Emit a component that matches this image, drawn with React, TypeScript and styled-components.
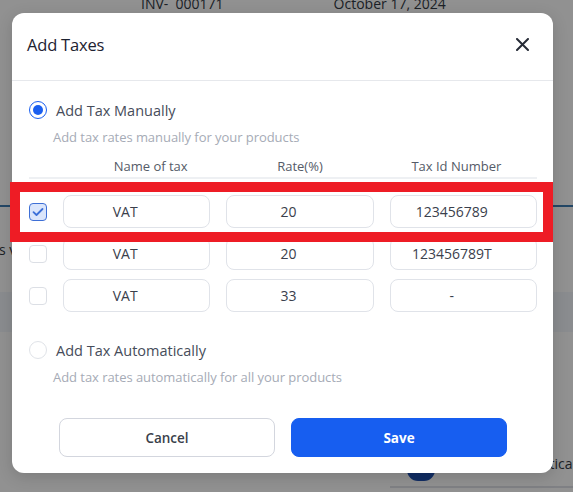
import React, { useState } from 'react';
import styled, { createGlobalStyle } from 'styled-components';

const GlobalStyle = createGlobalStyle`
  html, body {
    margin: 0;
    padding: 0;
  }
  body {
    font-family: "Open Sans", "Noto Sans", Arial, sans-serif;
    background: #ffffff;
  }
  * { box-sizing: border-box; }
`;

const Page = styled.div`
  position: relative;
  width: 573px;
  height: 492px;
  overflow: hidden;
  background: #ffffff;
`;

const BackPage = styled.div`
  display: flex;
  flex-direction: column;
  height: 100%;
  color: #333a45;
  font-size: 14px;
`;

const BackHeader = styled.div`
  display: flex;
  gap: 110px;
  padding-left: 141px;
  margin-top: -6px;
  height: 20px;
`;

const BackLine = styled.div<{ $top: number }>`
  height: 2px;
  background: #3f7db4;
  margin-top: ${p => p.$top}px;
`;

const BackText = styled.div<{ $top: number; $left: number }>`
  margin-top: ${p => p.$top}px;
  margin-left: ${p => p.$left}px;
  font-size: 14px;
  white-space: nowrap;
`;

const BackBand = styled.div<{ $top: number }>`
  margin-top: ${p => p.$top}px;
  height: 40px;
  background: #f3f6fb;
`;

const BackFooter = styled.div`
  margin-top: auto;
  display: flex;
  align-items: flex-start;
  gap: 63px;
  height: 23px;
  border-bottom: 2px solid #dfe2e8;
  margin-left: 390px;
  padding-left: 17px;
  margin-bottom: 4px;
  white-space: nowrap;
`;

const BackToggle = styled.div`
  width: 28px;
  height: 22px;
  border-radius: 11px;
  background: #1e4fb0;
  flex-shrink: 0;
  margin-top: -6px;
`;

const BackLabel = styled.span`
  margin-top: -11px;
`;

const Backdrop = styled.div`
  position: absolute;
  inset: 0;
  background: rgba(0, 0, 0, 0.43);
  display: flex;
  align-items: flex-start;
  padding: 13px 20px 0 12px;
`;

const Modal = styled.div`
  width: 541px;
  height: 460px;
  background: #ffffff;
  border-radius: 12px;
  box-shadow: 0 4px 16px rgba(0, 0, 0, 0.15);
  display: flex;
  flex-direction: column;
  position: relative;
`;

const ModalHeader = styled.div`
  height: 68px;
  display: flex;
  align-items: center;
  justify-content: space-between;
  padding: 0 24px 5px 15px;
  border-bottom: 1px solid #e6e8ec;
`;

const Title = styled.h2`
  margin: 0;
  font-size: 16.5px;
  font-weight: 500;
  color: #1d2230;
  letter-spacing: -0.2px;
`;

const CloseButton = styled.button`
  border: none;
  background: none;
  padding: 0;
  display: flex;
  cursor: pointer;
`;

const Body = styled.div`
  padding: 20px 16px 0 17px;
  display: flex;
  flex-direction: column;
`;

const RadioRow = styled.label`
  display: flex;
  align-items: center;
  gap: 9px;
  font-size: 14.5px;
  color: #464c5a;
  cursor: pointer;
  height: 18px;
`;

const Radio = styled.span<{ $checked?: boolean }>`
  width: 18px;
  height: 18px;
  border-radius: 50%;
  border: 1.5px solid ${p => (p.$checked ? '#1a5ff0' : '#e0e3e8')};
  display: flex;
  align-items: center;
  justify-content: center;
  flex-shrink: 0;
  &::after {
    content: '';
    width: 10px;
    height: 10px;
    border-radius: 50%;
    background: ${p => (p.$checked ? '#1a5ff0' : 'transparent')};
  }
`;

const Hint = styled.div`
  font-size: 13px;
  color: #a6abb6;
  margin: 9px 0 0 24px;
  letter-spacing: -0.05px;
`;

const Grid = styled.div`
  display: grid;
  grid-template-columns: 18px 1fr 1fr 1fr;
  column-gap: 16px;
  row-gap: 9px;
  align-items: center;
  margin-top: 11px;
`;

const HeadRow = styled.div`
  grid-column: 1 / -1;
  display: grid;
  grid-template-columns: 18px 1fr 1fr 1fr;
  column-gap: 16px;
  border-bottom: 2px solid #eef0f3;
  padding-bottom: 2px;
  margin-bottom: 7px;
`;

const HeadCell = styled.div<{ $shift?: number }>`
  font-size: 13px;
  color: #555b68;
  text-align: center;
  padding-left: ${p => Math.max(0, (p.$shift ?? 0) * 2)}px;
  padding-right: ${p => Math.max(0, -(p.$shift ?? 0) * 2)}px;
`;

const Check = styled.span<{ $checked?: boolean }>`
  width: 18px;
  height: 18px;
  border-radius: 4px;
  border: 1.5px solid ${p => (p.$checked ? '#3e6fd6' : '#dcdfe5')};
  background: ${p => (p.$checked ? '#dae5fb' : '#fff')};
  display: flex;
  align-items: center;
  justify-content: center;
  cursor: pointer;
`;

const Field = styled.div`
  height: 33px;
  border: 1px solid #e0e3e9;
  border-radius: 8px;
  display: flex;
  align-items: center;
  justify-content: center;
  padding-right: 23px;
  font-size: 14px;
  color: #3a404c;
`;

const AutoSection = styled.div`
  margin-top: 29px;
  display: flex;
  flex-direction: column;
`;

const Footer = styled.div`
  margin-top: auto;
  display: grid;
  grid-template-columns: 1fr 1fr;
  gap: 16px;
  padding: 0 46px 16px 47px;
`;

const Button = styled.button<{ $primary?: boolean }>`
  height: 39px;
  border-radius: 8px;
  font-family: inherit;
  font-size: 13.5px;
  font-weight: ${p => (p.$primary ? 700 : 600)};
  border: 1px solid ${p => (p.$primary ? '#175ef0' : '#d3d6de')};
  background: ${p => (p.$primary ? '#175ef0' : '#ffffff')};
  color: ${p => (p.$primary ? '#ffffff' : '#3a3f4b')};
  cursor: pointer;
`;

const Highlight = styled.div`
  position: absolute;
  left: -2px;
  top: 169px;
  width: 543px;
  height: 60px;
  border: 10px solid #ee1c25;
  pointer-events: none;
`;

const CheckIcon = () => (
  <svg width="12" height="10" viewBox="0 0 12 10" fill="none">
    <path d="M1.5 5.2 L4.5 8 L10.5 2" stroke="#3b6fd8" strokeWidth="1.8" strokeLinecap="round" strokeLinejoin="round" />
  </svg>
);

const CloseIcon = () => (
  <svg width="13" height="13" viewBox="0 0 13 13" fill="none">
    <path d="M1 1 L12 12 M12 1 L1 12" stroke="#262b36" strokeWidth="2" strokeLinecap="round" />
  </svg>
);

type TaxRow = { name: string; rate: string; id: string };

const rows: TaxRow[] = [
  { name: 'VAT', rate: '20', id: '123456789' },
  { name: 'VAT', rate: '20', id: '123456789T' },
  { name: 'VAT', rate: '33', id: '-' },
];

export default function App() {
  const [checked, setChecked] = useState<boolean[]>([true, false, false]);
  const [mode, setMode] = useState<'manual' | 'auto'>('manual');

  const toggle = (i: number) => {
    setChecked(checked.map((c, idx) => (idx === i ? !c : c)));
  };

  return (
    <>
      <GlobalStyle />
      <Page>
        <BackPage>
          <BackHeader>
            <span>INV-&nbsp; 000171</span>
            <span>October 17, 2024</span>
          </BackHeader>
          <BackLine $top={191} />
          <BackText $top={33} $left={-1}>s vary</BackText>
          <BackBand $top={33} />
          <BackFooter>
            <BackToggle />
            <BackLabel>Automatically</BackLabel>
          </BackFooter>
        </BackPage>

        <Backdrop>
          <Modal>
            <ModalHeader>
              <Title>Add Taxes</Title>
              <CloseButton aria-label="Close">
                <CloseIcon />
              </CloseButton>
            </ModalHeader>

            <Body>
              <RadioRow onClick={() => setMode('manual')}>
                <Radio $checked={mode === 'manual'} />
                Add Tax Manually
              </RadioRow>
              <Hint>Add tax rates manually for your products</Hint>

              <Grid>
                <HeadRow>
                  <span />
                  <HeadCell $shift={14}>Name of tax</HeadCell>
                  <HeadCell>Rate(%)</HeadCell>
                  <HeadCell $shift={-7}>Tax Id Number</HeadCell>
                </HeadRow>
                {rows.map((r, i) => (
                  <React.Fragment key={i}>
                    <Check $checked={checked[i]} onClick={() => toggle(i)}>
                      {checked[i] && <CheckIcon />}
                    </Check>
                    <Field>{r.name}</Field>
                    <Field>{r.rate}</Field>
                    <Field>{r.id}</Field>
                  </React.Fragment>
                ))}
              </Grid>

              <AutoSection>
                <RadioRow onClick={() => setMode('auto')}>
                  <Radio $checked={mode === 'auto'} />
                  Add Tax Automatically
                </RadioRow>
                <Hint>Add tax rates automatically for all your products</Hint>
              </AutoSection>
            </Body>

            <Footer>
              <Button>Cancel</Button>
              <Button $primary>Save</Button>
            </Footer>

            <Highlight />
          </Modal>
        </Backdrop>
      </Page>
    </>
  );
}
